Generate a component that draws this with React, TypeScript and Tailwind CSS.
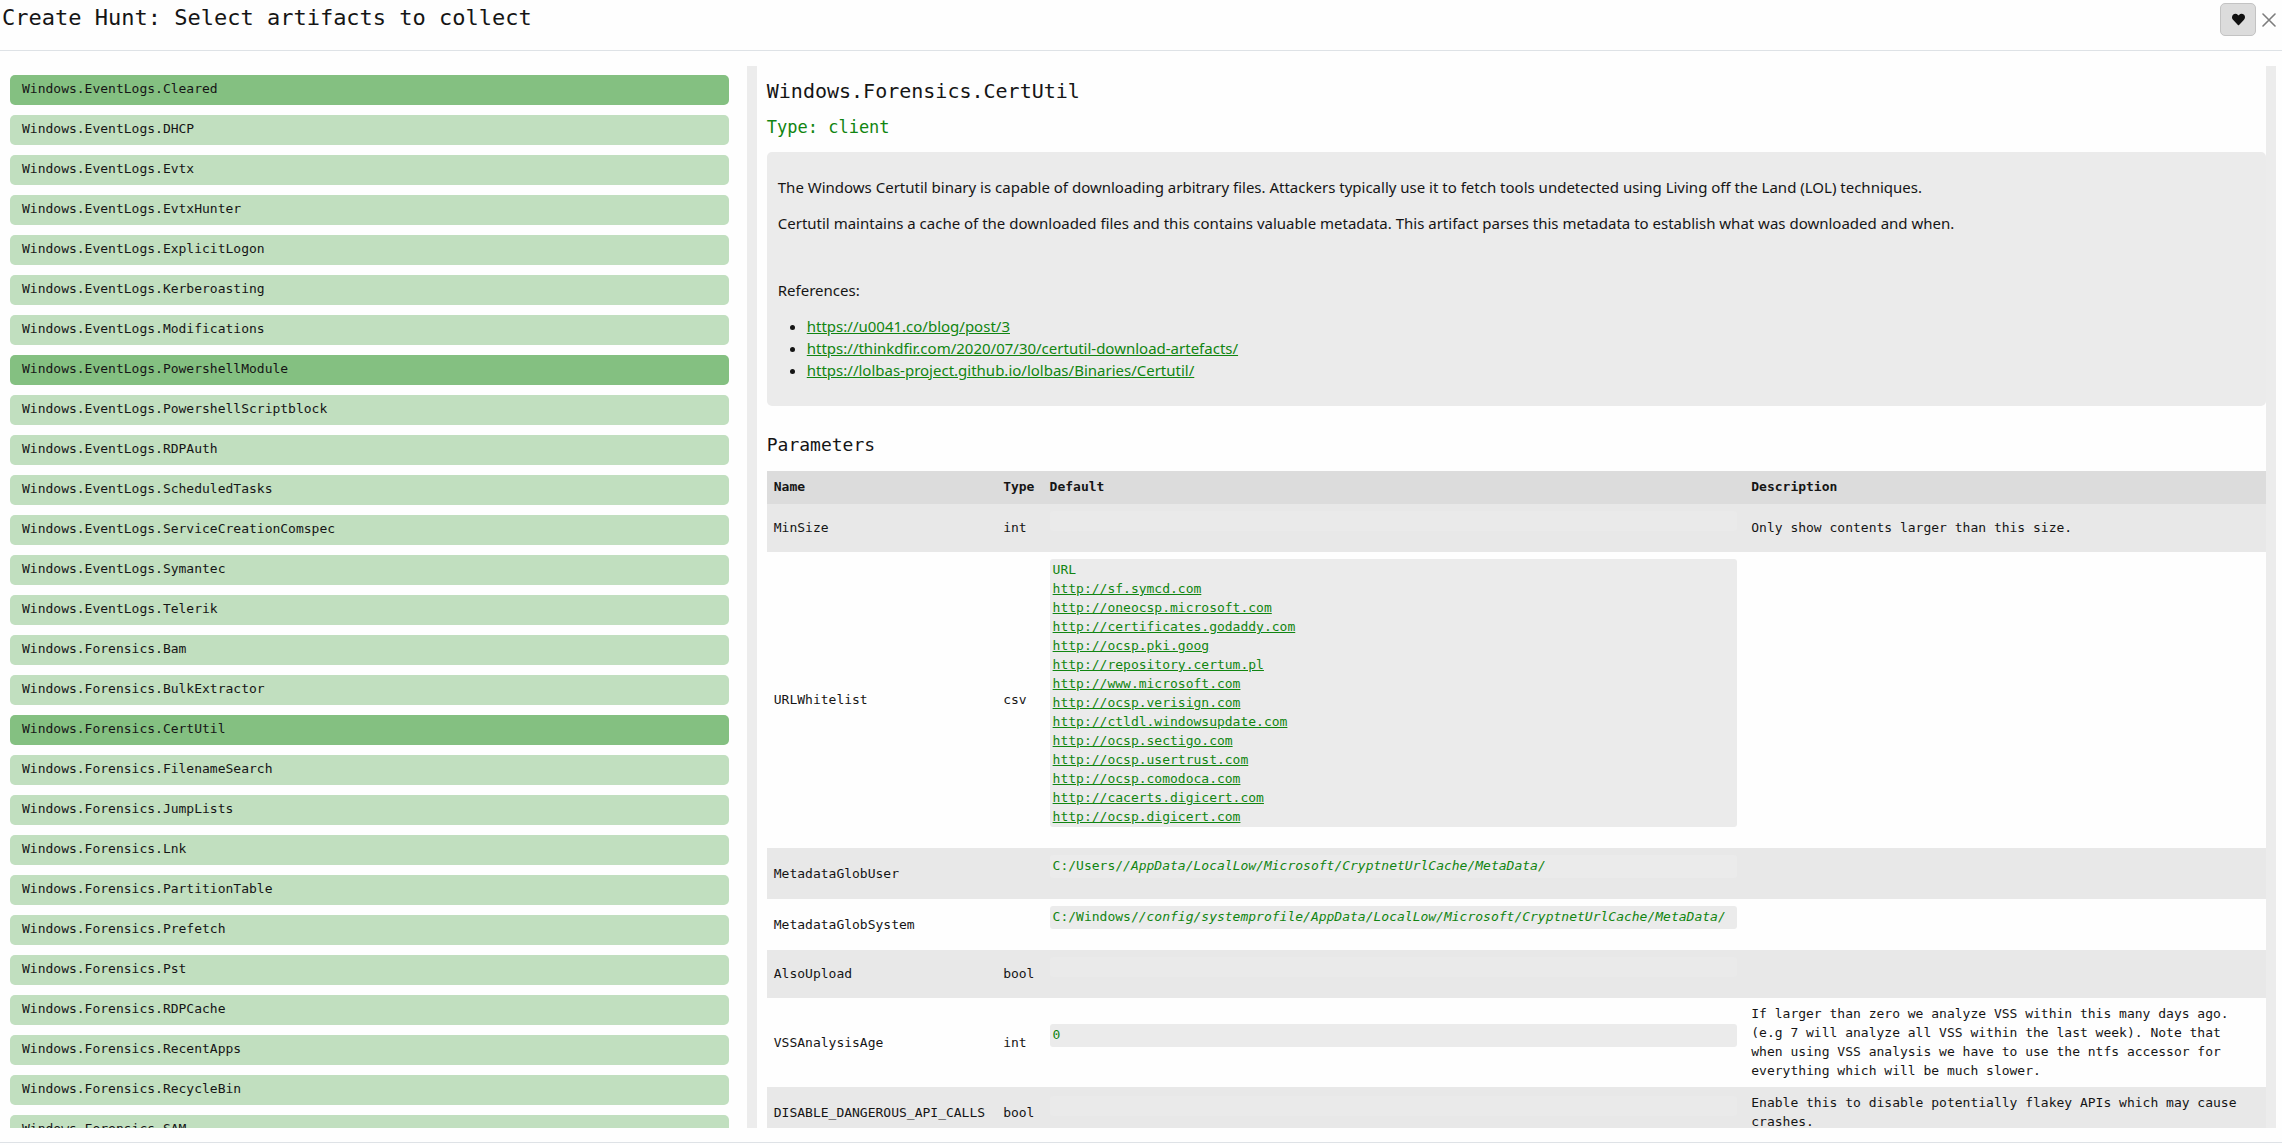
import React from 'react';
import { FaHeart } from 'react-icons/fa';

const artifacts = [
  { name: 'Windows.EventLogs.Cleared', selected: true },
  { name: 'Windows.EventLogs.DHCP' },
  { name: 'Windows.EventLogs.Evtx' },
  { name: 'Windows.EventLogs.EvtxHunter' },
  { name: 'Windows.EventLogs.ExplicitLogon' },
  { name: 'Windows.EventLogs.Kerberoasting' },
  { name: 'Windows.EventLogs.Modifications' },
  { name: 'Windows.EventLogs.PowershellModule', selected: true },
  { name: 'Windows.EventLogs.PowershellScriptblock' },
  { name: 'Windows.EventLogs.RDPAuth' },
  { name: 'Windows.EventLogs.ScheduledTasks' },
  { name: 'Windows.EventLogs.ServiceCreationComspec' },
  { name: 'Windows.EventLogs.Symantec' },
  { name: 'Windows.EventLogs.Telerik' },
  { name: 'Windows.Forensics.Bam' },
  { name: 'Windows.Forensics.BulkExtractor' },
  { name: 'Windows.Forensics.CertUtil', selected: true },
  { name: 'Windows.Forensics.FilenameSearch' },
  { name: 'Windows.Forensics.JumpLists' },
  { name: 'Windows.Forensics.Lnk' },
  { name: 'Windows.Forensics.PartitionTable' },
  { name: 'Windows.Forensics.Prefetch' },
  { name: 'Windows.Forensics.Pst' },
  { name: 'Windows.Forensics.RDPCache' },
  { name: 'Windows.Forensics.RecentApps' },
  { name: 'Windows.Forensics.RecycleBin' },
  { name: 'Windows.Forensics.SAM' },
];

const references = [
  'https://u0041.co/blog/post/3',
  'https://thinkdfir.com/2020/07/30/certutil-download-artefacts/',
  'https://lolbas-project.github.io/lolbas/Binaries/Certutil/',
];

const whitelist = [
  'http://sf.symcd.com',
  'http://oneocsp.microsoft.com',
  'http://certificates.godaddy.com',
  'http://ocsp.pki.goog',
  'http://repository.certum.pl',
  'http://www.microsoft.com',
  'http://ocsp.verisign.com',
  'http://ctldl.windowsupdate.com',
  'http://ocsp.sectigo.com',
  'http://ocsp.usertrust.com',
  'http://ocsp.comodoca.com',
  'http://cacerts.digicert.com',
  'http://ocsp.digicert.com',
];

type Parameter = {
  name: string;
  type?: string;
  value?: React.ReactNode;
  description?: string;
};

const parameters: Parameter[] = [
  {
    name: 'MinSize',
    type: 'int',
    description: 'Only show contents larger than this size.',
  },
  {
    name: 'URLWhitelist',
    type: 'csv',
    value: (
      <>
        <div>URL</div>
        {whitelist.map((url) => (
          <div key={url}>
            <a href={url} className="underline">
              {url}
            </a>
          </div>
        ))}
      </>
    ),
  },
  {
    name: 'MetadataGlobUser',
    value: (
      <>
        C:/Users/
        <em>/AppData/LocalLow/Microsoft/CryptnetUrlCache/MetaData/</em>
      </>
    ),
  },
  {
    name: 'MetadataGlobSystem',
    value: (
      <>
        C:/Windows/
        <em>
          /config/systemprofile/AppData/LocalLow/Microsoft/CryptnetUrlCache/MetaData/
        </em>
      </>
    ),
  },
  { name: 'AlsoUpload', type: 'bool' },
  {
    name: 'VSSAnalysisAge',
    type: 'int',
    value: '0',
    description:
      'If larger than zero we analyze VSS within this many days ago. (e.g 7 will analyze all VSS within the last week). Note that when using VSS analysis we have to use the ntfs accessor for everything which will be much slower.',
  },
  {
    name: 'DISABLE_DANGEROUS_API_CALLS',
    type: 'bool',
    description:
      'Enable this to disable potentially flakey APIs which may cause crashes.',
  },
];

function Header() {
  return (
    <header className="flex h-[51px] shrink-0 items-start justify-between border-b border-[#dee2e6] pr-1.5 pl-0.5">
      <h1 className="pt-1 text-[22px] leading-7">
        Create Hunt: Select artifacts to collect
      </h1>
      <div className="flex items-center gap-1.5 pt-[3px]">
        <button
          type="button"
          aria-label="Add to favorites"
          className="flex h-[33px] w-9 items-center justify-center rounded-[5px] border border-[#c3c3c3] bg-[#dcdcdc]"
        >
          <FaHeart className="size-[13px] text-[#111]" />
        </button>
        <button type="button" aria-label="Close" className="text-[#7d7d7d]">
          <svg
            className="size-3.5"
            viewBox="0 0 14 14"
            fill="none"
            stroke="currentColor"
            strokeWidth="1.6"
            strokeLinecap="round"
          >
            <path d="M1 1l12 12M13 1L1 13" />
          </svg>
        </button>
      </div>
    </header>
  );
}

function ArtifactList() {
  return (
    <nav
      aria-label="Artifacts"
      className="w-[33.25%] shrink-0 overflow-hidden border-r-[10px] border-[#ececec]"
    >
      <ul className="flex flex-col gap-2.5 pt-[9px] pr-[18px] pl-2.5">
        {artifacts.map((artifact) => (
          <li key={artifact.name}>
            <button
              type="button"
              className={
                artifact.selected
                  ? 'block h-[30px] w-full rounded-[5px] bg-[#84c081] px-3 pb-0.5 text-left text-[13px] leading-5'
                  : 'block h-[30px] w-full rounded-[5px] bg-[#c1dfbf] px-3 pb-0.5 text-left text-[13px] leading-5'
              }
            >
              {artifact.name}
            </button>
          </li>
        ))}
      </ul>
    </nav>
  );
}

function Description() {
  return (
    <div className="mt-3 h-[254px] rounded-[5px] bg-[#ebebeb] px-[11px] pt-6 font-['Noto_Sans',sans-serif] text-[15px] leading-[22px]">
      <p>
        The Windows Certutil binary is capable of downloading arbitrary files.
        Attackers typically use it to fetch tools undetected using Living off
        the Land (LOL) techniques.
      </p>
      <p className="mt-3.5">
        Certutil maintains a cache of the downloaded files and this contains
        valuable metadata. This artifact parses this metadata to establish what
        was downloaded and when.
      </p>
      <p className="mt-[45px]">References:</p>
      <ul className="mt-3.5 list-disc pl-[29px]">
        {references.map((url) => (
          <li key={url}>
            <a href={url} className="text-[#118511] underline">
              {url}
            </a>
          </li>
        ))}
      </ul>
    </div>
  );
}

function ParameterTable() {
  return (
    <table className="w-full table-fixed text-left text-[13px] leading-[19px]">
      <colgroup>
        <col className="w-[15.3%]" />
        <col className="w-[3.1%]" />
        <col className="w-[46.8%]" />
        <col />
      </colgroup>
      <thead>
        <tr className="bg-[#dcdcdc]">
          <th className="px-[7px] pt-1.5 pb-2">Name</th>
          <th className="px-[7px] pt-1.5 pb-2">Type</th>
          <th className="px-[7px] pt-1.5 pb-2">Default</th>
          <th className="px-[7px] pt-1.5 pb-2">Description</th>
        </tr>
      </thead>
      <tbody>
        {parameters.map((param) => (
          <tr key={param.name} className="odd:bg-[#e8e8e8]">
            <td className="px-[7px] pt-1.5 pb-[7px]">{param.name}</td>
            <td className="px-[7px] pt-1.5 pb-[7px]">{param.type}</td>
            <td className="px-[7px] pt-[7px] pb-1.5">
              {param.value ? (
                <div className="mb-[15px] min-h-[23px] rounded-[3px] bg-[#ebebeb] px-[3px] py-px whitespace-nowrap text-[#118511]">
                  {param.value}
                </div>
              ) : (
                <div className="mb-[15px] h-5 rounded-[3px] bg-[#eaeaea]" />
              )}
            </td>
            <td className="px-[7px] pt-1.5 pb-[7px]">{param.description}</td>
          </tr>
        ))}
      </tbody>
    </table>
  );
}

function ArtifactDetails() {
  return (
    <section className="min-w-0 flex-1 overflow-hidden border-r-[10px] border-[#ececec] pl-2.5">
      <h2 className="pt-[11px] text-[20px] leading-7">
        Windows.Forensics.CertUtil
      </h2>
      <h3 className="mt-2.5 text-[17px] leading-6 text-[#118511]">
        Type: client
      </h3>
      <div className="pt-px">
        <Description />
      </div>
      <h3 className="pt-[25px] pb-[13px] text-[18px] leading-[27px]">
        Parameters
      </h3>
      <ParameterTable />
    </section>
  );
}

function App() {
  return (
    <div className="flex h-screen flex-col overflow-hidden bg-[#fefefe] pb-0.5 font-['DejaVu_Sans_Mono',monospace] text-[#151515]">
      <Header />
      <main className="flex min-h-0 flex-1 border-b border-[#dee2e6] pt-[15px] pr-1.5 pb-3.5">
        <ArtifactList />
        <ArtifactDetails />
      </main>
    </div>
  );
}

export default App;
